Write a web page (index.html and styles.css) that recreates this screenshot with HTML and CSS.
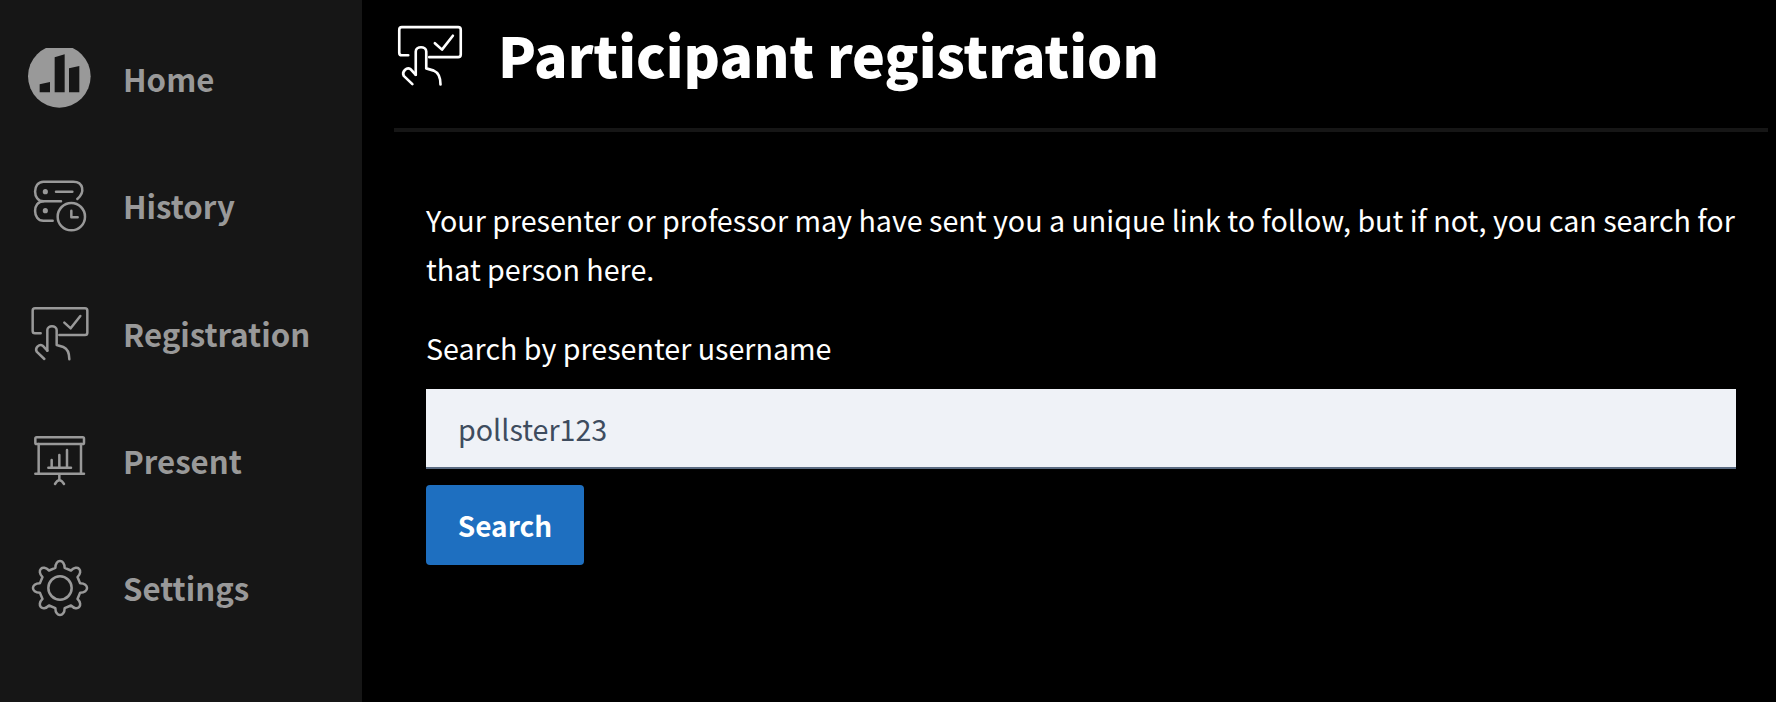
FILE: index.html
```html
<!DOCTYPE html>
<html lang="en">
<head>
    <meta charset="UTF-8">
    <title>Participant registration</title>
    <link rel="stylesheet" href="styles.css">
</head>
<body>
    <svg class="icon-defs" width="0" height="0">
        <symbol id="icon-register" viewBox="84 66 192 192">
            <path d="M122 160H105Q98 160 98 153V92Q98 85 105 85H255Q262 85 262 92V158Q262 165 255 165H178"/>
            <path d="M193 128L212 145L241 108"/>
            <path d="M142 212V150C142 135 170 135 170 150V195L190 201C202 206 208 220 208 238"/>
            <path d="M142 212L128 197C118 190 104 204 110 215L133 237"/>
        </symbol>
    </svg>

    <aside class="sidebar">
        <a class="nav-item">
            <svg class="nav-icon" viewBox="84 84 192 192">
                <circle class="fill" cx="178" cy="169" r="94"/>
                <path class="cut" d="M119 193L150 186V217H119ZM164 112L194 103V217H164ZM207 145L238 138V217H207Z"/>
            </svg>
            <span>Home</span>
        </a>
        <a class="nav-item">
            <svg class="nav-icon" viewBox="84 468 192 192">
                <path d="M183 547H130C97 547 97 488 130 488H220C250 488 256 520 232 540"/>
                <path d="M130 547C97 547 97 605 130 605H158"/>
                <circle cx="136" cy="518" r="4"/>
                <circle cx="136" cy="575" r="4"/>
                <path d="M168 518H217"/>
                <circle cx="214" cy="593" r="41"/>
                <path d="M214 575V595H233"/>
            </svg>
            <span>History</span>
        </a>
        <a class="nav-item">
            <svg class="nav-icon"><use href="#icon-register"/></svg>
            <span>Registration</span>
        </a>
        <a class="nav-item">
            <svg class="nav-icon" viewBox="84 450 192 192">
                <rect x="106" y="472" width="146" height="20" rx="4"/>
                <path d="M116 492V581M243 492V581M106 581H252M178 581V600M165 612Q178 590 192 612"/>
                <path d="M145 563H213M155 563V540M178 563V525M201 563V510"/>
            </svg>
            <span>Present</span>
        </a>
        <a class="nav-item">
            <svg class="nav-icon" viewBox="84 831 192 192">
                <g transform="translate(180 924)">
                    <path d="M-13.9 -60.4C-14 -88 14 -88 13.9 -60.4L32.9 -52.5C52.3 -72.1 72.1 -52.3 52.5 -32.9L60.4 -13.9C88 -14 88 14 60.4 13.9L52.5 32.9C72.1 52.3 52.3 72.1 32.9 52.5L13.9 60.4C14 88 -14 88 -13.9 60.4L-32.9 52.5C-52.3 72.1 -72.1 52.3 -52.5 32.9L-60.4 13.9C-88 14 -88 -14 -60.4 -13.9L-52.5 -32.9C-72.1 -52.3 -52.3 -72.1 -32.9 -52.5Z"/>
                    <circle r="35"/>
                </g>
            </svg>
            <span>Settings</span>
        </a>
    </aside>

    <main class="main">
        <header class="page-header">
            <svg class="header-icon"><use href="#icon-register"/></svg>
            <h1>Participant registration</h1>
        </header>
        <section class="content">
            <p class="intro">Your presenter or professor may have sent you a unique link to follow, but if not, you can search for that person here.</p>
            <label class="field-label" for="presenter">Search by presenter username</label>
            <input class="text-input" id="presenter" type="text" value="pollster123">
            <button class="btn" type="button">Search</button>
        </section>
    </main>
</body>
</html>
```

FILE: styles.css
```css
* {
    box-sizing: border-box;
}

body {
    font-family: "Noto Sans CJK SC", "Noto Sans", sans-serif;
    background-color: #000000;
    color: #FFFFFF;
    display: flex;
    height: 100vh;
    margin: 0;
    overflow: hidden;
}

.icon-defs {
    display: block;
    width: 0;
    height: 0;
}

.sidebar {
    background-color: #161616;
    width: 362px;
    flex-shrink: 0;
    padding: 16px 0 0 28px;
}

.nav-item {
    display: flex;
    align-items: center;
    gap: 31px;
    height: 127.3px;
    color: #999999;
    font-size: 31.2px;
    font-weight: 700;
    line-height: 40px;
}

.nav-item span {
    margin-bottom: 1px;
}

.nav-icon {
    width: 64px;
    height: 64px;
    fill: none;
    stroke: #999999;
    stroke-width: 7.5;
    stroke-linecap: round;
    stroke-linejoin: round;
}

.nav-icon .fill {
    fill: #999999;
    stroke: none;
}

.nav-icon .cut {
    fill: #161616;
    stroke: none;
}

.main {
    flex: 1;
    min-width: 0;
    padding: 0 8px 0 32px;
}

.page-header {
    display: flex;
    align-items: center;
    gap: 32px;
    height: 132px;
    padding-bottom: 20px;
    border-bottom: 4px solid #161616;
}

.header-icon {
    width: 72px;
    height: 72px;
    margin-top: 4px;
    fill: none;
    stroke: #FFFFFF;
    stroke-width: 7;
    stroke-linecap: round;
    stroke-linejoin: round;
}

.page-header h1 {
    font-size: 55.5px;
    font-weight: 900;
    line-height: 72px;
    margin: 0;
}

.content {
    padding: 63px 32px 0 32px;
}

.intro {
    font-size: 28.65px;
    line-height: 49px;
    margin: 0 0 33px 0;
}

.field-label {
    display: block;
    font-size: 28.65px;
    line-height: 44px;
    margin-bottom: 19px;
}

.text-input {
    display: block;
    width: 100%;
    height: 80px;
    background-color: #EFF2F7;
    border: none;
    border-bottom: 2px solid #5A6B82;
    color: #3E4C5E;
    font-family: inherit;
    font-size: 28.65px;
    padding: 0 32px;
    margin-bottom: 16px;
}

.btn {
    display: block;
    background-color: #1E6FC0;
    color: #FFFFFF;
    border: none;
    border-radius: 4px;
    width: 158px;
    height: 80px;
    font-family: inherit;
    font-size: 28px;
    font-weight: 700;
}
```
